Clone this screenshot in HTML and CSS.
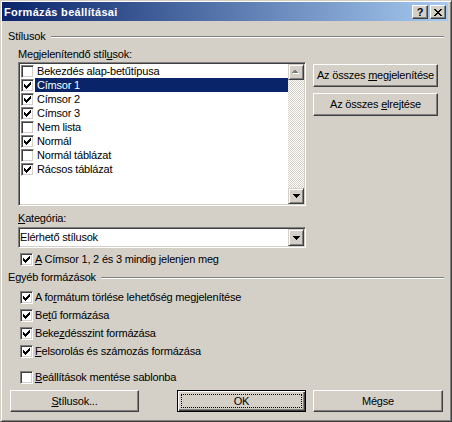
FILE: index.html
```html
<!DOCTYPE html>
<html lang="hu">
<head>
<meta charset="utf-8">
<title>Formázás beállításai</title>
<link rel="stylesheet" href="styles.css">
</head>
<body>
<div class="window">
  <div class="titlebar">
    <span class="title">Formázás beállításai</span>
    <div class="caption-btns">
      <span class="cbtn help">?</span>
      <span class="cbtn close"><svg width="8" height="7" viewBox="0 0 8 7" shape-rendering="crispEdges"><path d="M0 0h2v1H0z M6 0h2v1H6z M1 1h2v1H1z M5 1h2v1H5z M2 2h4v1H2z M3 3h2v1H3z M2 4h4v1H2z M1 5h2v1H1z M5 5h2v1H5z M0 6h2v1H0z M6 6h2v1H6z" fill="#000"/></svg></span>
    </div>
  </div>
  <div class="content">
    <div class="group-head"><span>Stílusok</span><span class="etch"></span></div>
    <div class="styles-block">
      <div class="label label-top">Megjelenítendő stíl<u>u</u>sok:</div>
      <div class="list-area">
        <div class="listbox">
          <ul class="list-items">
            <li class="item"><span class="cb"></span><span class="item-text">Bekezdés alap-betűtípusa</span></li>
            <li class="item selected"><span class="cb checked"></span><span class="item-text">Címsor 1</span></li>
            <li class="item"><span class="cb checked"></span><span class="item-text">Címsor 2</span></li>
            <li class="item"><span class="cb checked"></span><span class="item-text">Címsor 3</span></li>
            <li class="item"><span class="cb"></span><span class="item-text">Nem lista</span></li>
            <li class="item"><span class="cb checked"></span><span class="item-text">Normál</span></li>
            <li class="item"><span class="cb"></span><span class="item-text">Normál táblázat</span></li>
            <li class="item"><span class="cb checked"></span><span class="item-text">Rácsos táblázat</span></li>
          </ul>
          <div class="vscroll">
            <span class="sbtn"><svg width="8" height="5" viewBox="0 0 8 5" shape-rendering="crispEdges"><path d="M4 1h1v1h1v1h1v1H1V3h1V2h1V1h1z" fill="#fff"/><path d="M3 0h1v1h1v1h1v1H0V2h1V1h1V0h1z" fill="#808080"/></svg></span>
            <span class="track"></span>
            <span class="sbtn"><svg width="7" height="4" viewBox="0 0 7 4" shape-rendering="crispEdges"><path d="M0 0h7v1H0z M1 1h5v1H1z M2 2h3v1H2z M3 3h1v1H3z" fill="#000"/></svg></span>
          </div>
        </div>
        <div class="side-btns">
          <button class="btn side">Az összes <u>m</u>egjelenítése</button>
          <button class="btn side">Az összes <u>e</u>lrejtése</button>
        </div>
      </div>
      <div class="label label-cat"><u>K</u>ategória:</div>
      <div class="combo">
        <span class="combo-text">Elérhető stílusok</span>
        <span class="sbtn combo-btn"><svg width="7" height="4" viewBox="0 0 7 4" shape-rendering="crispEdges"><path d="M0 0h7v1H0z M1 1h5v1H1z M2 2h3v1H2z M3 3h1v1H3z" fill="#000"/></svg></span>
      </div>
      <div class="check-row first-check"><span class="cb checked"></span><span><u>A</u> Címsor 1, 2 és 3 mindig jelenjen meg</span></div>
    </div>
    <div class="group-head group-other"><span>Egyéb formázások</span><span class="etch"></span></div>
    <div class="other-list">
      <div class="check-row"><span class="cb checked"></span><span>A fo<u>r</u>mátum törlése lehetőség megjelenítése</span></div>
      <div class="check-row"><span class="cb checked"></span><span>Be<u>t</u>ű formázása</span></div>
      <div class="check-row"><span class="cb checked"></span><span>Beke<u>z</u>désszint formázása</span></div>
      <div class="check-row"><span class="cb checked"></span><span><u>F</u>elsorolás és számozás formázása</span></div>
    </div>
    <div class="check-row save-row"><span class="cb"></span><span><u>B</u>eállítások mentése sablonba</span></div>
    <div class="bottom-btns">
      <button class="btn bottom"><u>S</u>tílusok...</button>
      <button class="btn bottom default ok">OK</button>
      <button class="btn bottom cancel">Mégse</button>
    </div>
  </div>
</div>
</body>
</html>
```
FILE: styles.css
```css
html, body {
  margin: 0;
  padding: 0;
  background: #d4d0c8;
}
body {
  font: 11px/13px "Liberation Sans", Arial, sans-serif;
  letter-spacing: -0.2px;
  color: #000;
}
u { text-decoration: underline; }

.window {
  width: 452px;
  height: 422px;
  box-sizing: border-box;
  background: #d4d0c8;
  border: 1px solid;
  border-color: #d4d0c8 #404040 #404040 #d4d0c8;
  box-shadow: inset 1px 1px #fff, inset -1px -1px #808080;
  padding: 1px 3px 0 1px;
}

.titlebar {
  height: 19px;
  display: flex;
  align-items: flex-start;
  background: linear-gradient(to right, #0a246a, #a6caf0);
  padding: 0 2px;
  color: #fff;
}
.title {
  flex: 1;
  font-weight: bold;
  letter-spacing: 0.3px;
  line-height: 19px;
  padding-top: 1px;
  height: 18px;
}
.caption-btns {
  display: flex;
  gap: 2px;
  margin-top: 3px;
}
.cbtn {
  width: 16px;
  height: 14px;
  box-sizing: border-box;
  background: #d4d0c8;
  border: 1px solid;
  border-color: #fff #404040 #404040 #fff;
  box-shadow: inset -1px -1px #808080;
  display: flex;
  align-items: center;
  justify-content: center;
  color: #000;
  font-weight: bold;
  font-size: 11px;
  line-height: 12px;
  letter-spacing: 0;
}

.content {
  padding: 0 4px 0 6px;
}

.group-head {
  display: flex;
  align-items: center;
  height: 13px;
  margin-top: 9px;
}
.group-head .etch {
  flex: 1;
  margin-left: 5px;
  border-top: 1px solid #808080;
  border-bottom: 1px solid #fff;
}

.styles-block {
  padding-left: 10px;
}
.label-top { margin-top: 5px; }

.list-area {
  display: flex;
  align-items: flex-start;
  gap: 7px;
  margin-top: 1px;
}
.listbox {
  width: 288px;
  height: 144px;
  box-sizing: border-box;
  border: 1px solid;
  border-color: #808080 #fff #fff #808080;
  box-shadow: inset 1px 1px #404040, inset -1px -1px #d4d0c8;
  background: #fff;
  padding: 1px;
  display: flex;
}
.list-items {
  list-style: none;
  margin: 0;
  padding: 0;
  flex: 1;
}
.item {
  display: flex;
  align-items: center;
  height: 14px;
}
.item .cb {
  margin: 0 1px 0 1px;
}
.item-text {
  flex: 1;
  height: 13px;
  line-height: 13px;
  padding: 1px 0 0 2px;
}
.item.selected .item-text {
  background: #0a246a;
  color: #fff;
}

.cb {
  flex: none;
  width: 13px;
  height: 13px;
  box-sizing: border-box;
  border: 1px solid;
  border-color: #808080 #fff #fff #808080;
  box-shadow: inset 1px 1px #404040, inset -1px -1px #d4d0c8;
  background: #fff;
}
.cb.checked {
  background: #fff url("data:image/svg+xml,%3Csvg xmlns='http://www.w3.org/2000/svg' width='7' height='7' shape-rendering='crispEdges'%3E%3Cpath d='M0 2h1v3H0z M1 3h1v3H1z M2 4h1v3H2z M3 3h1v3H3z M4 2h1v3H4z M5 1h1v3H5z M6 0h1v3H6z' fill='%23000'/%3E%3C/svg%3E") no-repeat 2px 2px;
}

.vscroll {
  width: 16px;
  display: flex;
  flex-direction: column;
}
.track {
  flex: 1;
  background: repeating-conic-gradient(#fff 0 25%, #d4d0c8 0 50%) 0 0 / 2px 2px;
}
.sbtn {
  height: 16px;
  width: 16px;
  box-sizing: border-box;
  border: 1px solid;
  border-color: #d4d0c8 #404040 #404040 #d4d0c8;
  box-shadow: inset 1px 1px #fff, inset -1px -1px #808080;
  background: #d4d0c8;
  display: flex;
  align-items: center;
  justify-content: center;
}

.side-btns {
  display: flex;
  flex-direction: column;
  gap: 6px;
  margin-top: 2px;
}
.btn {
  font: inherit;
  letter-spacing: inherit;
  color: #000;
  background: #d4d0c8;
  border: 1px solid;
  border-color: #fff #404040 #404040 #fff;
  box-shadow: inset -1px -1px #808080;
  padding: 0;
  margin: 0;
  text-align: center;
}
.btn.side {
  width: 125px;
  height: 23px;
}

.label-cat { margin-top: 6px; }

.combo {
  margin-top: 2px;
  width: 288px;
  height: 21px;
  box-sizing: border-box;
  border: 1px solid;
  border-color: #808080 #fff #fff #808080;
  box-shadow: inset 1px 1px #404040, inset -1px -1px #d4d0c8;
  background: #fff;
  padding: 1px;
  display: flex;
}
.combo-text {
  flex: 1;
  line-height: 17px;
  padding-left: 0;
}
.combo-btn {
  height: 17px;
}

.check-row {
  display: flex;
  align-items: center;
  gap: 2px;
  height: 13px;
  margin-left: 2px;
}
.first-check { margin-top: 5px; }

.group-other { margin-top: 5px; }

.other-list {
  display: flex;
  flex-direction: column;
  gap: 5px;
  margin-top: 7px;
  margin-left: 10px;
}
.save-row {
  margin-left: 12px;
  margin-top: 13px;
}

.bottom-btns {
  display: flex;
  margin-top: 6px;
  padding-left: 2px;
}
.btn.bottom {
  width: 129px;
  height: 22px;
}
.btn.ok { margin-left: 38px; }
.btn.cancel { margin-left: 7px; width: 130px; }
.btn.default {
  border: 1px solid #000;
  box-shadow: inset 1px 1px #fff, inset -1px -1px #404040, inset -2px -2px #808080;
  outline: 1px dotted #000;
  outline-offset: -5px;
}
```
